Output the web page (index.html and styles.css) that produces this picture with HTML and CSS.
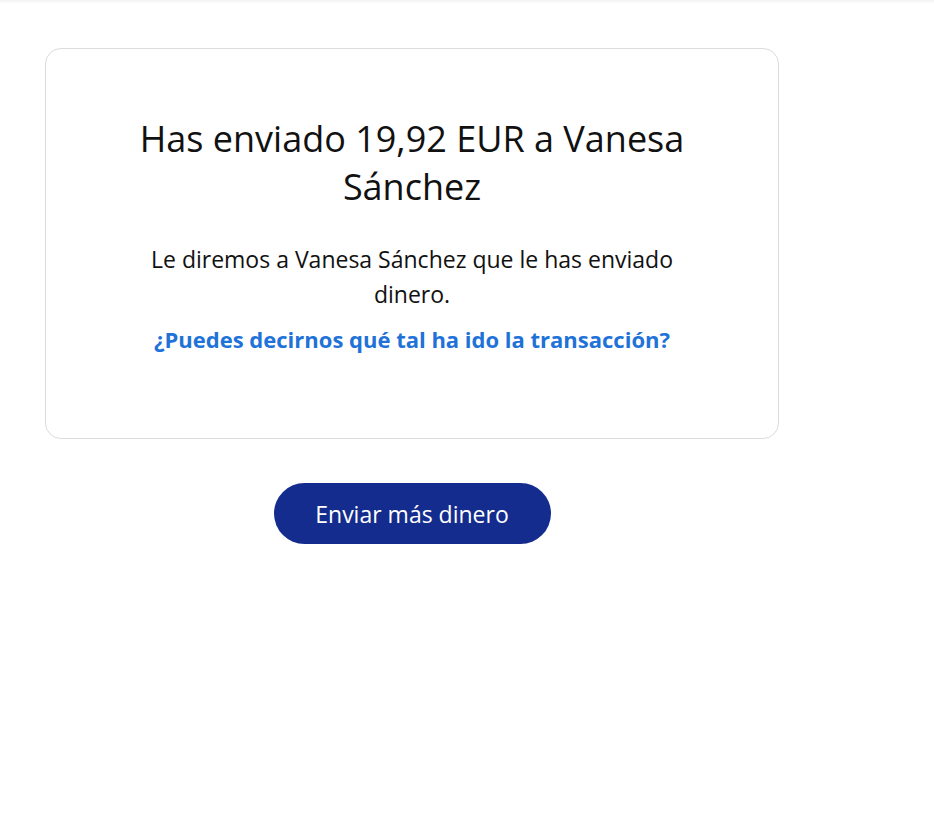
FILE: index.html
```html
<!DOCTYPE html>
<html lang="es">

<head>
    <meta charset="UTF-8">
    <meta name="viewport" content="width=device-width, initial-scale=1.0">
    <title>Enviado</title>
    <link rel="stylesheet" href="styles.css">
</head>

<body>
    <div class="topbar"></div>
    <main class="page">
        <section class="card">
            <div class="content">
                <h1 class="title">Has enviado 19,92 EUR a Vanesa Sánchez</h1>
                <p class="note">Le diremos a Vanesa Sánchez que le has enviado dinero.</p>
                <a class="feedback" href="#">¿Puedes decirnos qué tal ha ido la transacción?</a>
            </div>
        </section>
        <div class="actions">
            <button class="btn-primary" type="button">Enviar más dinero</button>
        </div>
    </main>
</body>

</html>
```

FILE: styles.css
```css
* {
    margin: 0;
    padding: 0;
    box-sizing: border-box;
}
html,
body {
    background: #fff;
    font-family: "Open Sans", Lato, Arial, sans-serif;
    color: #111;
}
.topbar {
    height: 4px;
    background: linear-gradient(to bottom, #f2f2f2, #fff);
}
.page {
    width: 734px;
    margin-left: 45px;
    padding-top: 44px;
}
.card {
    height: 391px;
    border: 1px solid #dcdcdc;
    border-radius: 16px;
    display: flex;
    justify-content: center;
    padding-top: 66px;
}
.content {
    width: 570px;
    text-align: center;
}
.title {
    font-size: 36px;
    line-height: 48px;
    font-weight: 400;
}
.note {
    font-size: 23px;
    line-height: 35px;
    margin-top: 31px;
}
.feedback {
    display: inline-block;
    margin-top: 12px;
    font-size: 22px;
    font-weight: 700;
    color: #1f72d8;
    text-decoration: none;
}
.actions {
    display: flex;
    justify-content: center;
    margin-top: 44px;
}
.btn-primary {
    width: 277px;
    height: 61px;
    border: none;
    border-radius: 31px;
    background: #142c8e;
    color: #fff;
    font-family: inherit;
    font-size: 23px;
    font-weight: 500;
}
```
